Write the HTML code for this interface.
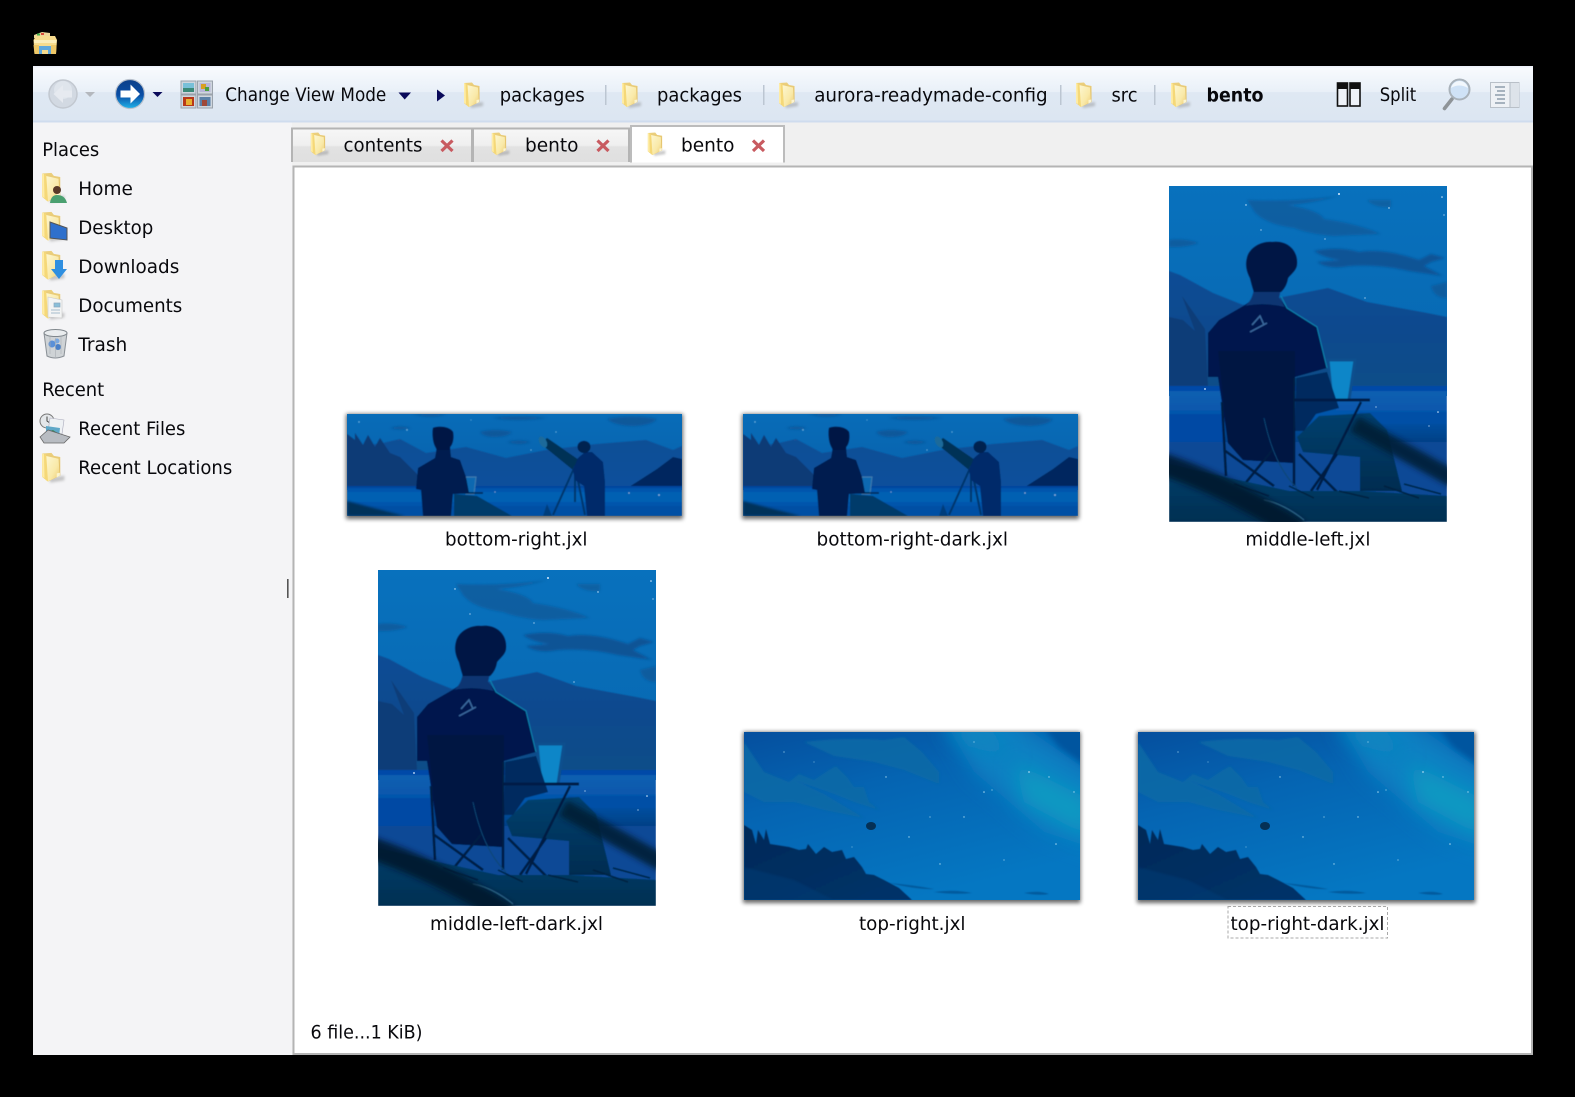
<!DOCTYPE html>
<html><head><meta charset="utf-8"><title>bento</title>
<style>
html,body{margin:0;padding:0;background:#000;width:1575px;height:1097px;overflow:hidden}
svg{display:block}
text{font-family:"DejaVu Sans","Liberation Sans",sans-serif;font-size:18.8px;fill:#08080c}
</style></head><body>
<svg width="1575" height="1097" viewBox="0 0 1575 1097" xmlns="http://www.w3.org/2000/svg">
<defs>
<linearGradient id="tb" x1="0" y1="0" x2="0" y2="1"><stop offset="0" stop-color="#f9fbfe"/><stop offset=".47" stop-color="#e9f0f8"/><stop offset=".48" stop-color="#dfe8f3"/><stop offset="1" stop-color="#dce6f2"/></linearGradient>
<linearGradient id="tab" x1="0" y1="0" x2="0" y2="1"><stop offset="0" stop-color="#f7f7f7"/><stop offset=".5" stop-color="#efefef"/><stop offset=".55" stop-color="#e2e2e2"/><stop offset="1" stop-color="#dfdfdf"/></linearGradient>
<linearGradient id="fo" x1="0" y1="0" x2="1" y2="1"><stop offset="0" stop-color="#fdf7d2"/><stop offset=".6" stop-color="#f9e9a8"/><stop offset="1" stop-color="#ecca70"/></linearGradient>
<linearGradient id="fb" x1="0" y1="0" x2="0" y2="1"><stop offset="0" stop-color="#ecd07e"/><stop offset="1" stop-color="#d8b052"/></linearGradient>
<filter id="b1" x="-30%" y="-30%" width="160%" height="160%"><feGaussianBlur stdDeviation="1"/></filter>
<filter id="b05"><feGaussianBlur stdDeviation=".45"/></filter>
<filter id="b3" x="-50%" y="-50%" width="200%" height="200%"><feGaussianBlur stdDeviation="3"/></filter>
<filter id="b10" x="-50%" y="-50%" width="200%" height="200%"><feGaussianBlur stdDeviation="10"/></filter>
<filter id="sh" x="-5%" y="-10%" width="110%" height="125%"><feGaussianBlur stdDeviation="2"/></filter>
<filter id="fs" x="-30%" y="-30%" width="170%" height="170%"><feGaussianBlur stdDeviation="1.2"/></filter>

<symbol id="fold" viewBox="0 0 24 26" overflow="visible">
<path d="M7 22 L20 20 L20 24 L8 26Z" fill="#8a8a8a" opacity=".45" filter="url(#fs)"/>
<path d="M1 1 L9 .5 L11 3 L16.500 4 L16.500 20 L6 25 L1 21Z" fill="url(#fb)"/>
<path d="M4 3 L15 5.500 L16 20 L6 25 L4 24Z" fill="url(#fo)"/>
<path d="M1 1 L4.500 2 L6 25 L1 21Z" fill="#f5d878"/>
<path d="M1 1 L2.500 1.500 L3 22 L1 21Z" fill="#fff0ae" opacity=".85"/>
<path d="M13.500 18 L16.200 17.500 L16.200 20 L13.500 21.500Z" fill="#fbf4d0"/>
</symbol>

<linearGradient id="aS" x1="0" y1="0" x2="0" y2="1"><stop offset="0" stop-color="#086cb8"/><stop offset="1" stop-color="#0760aa"/></linearGradient>
<linearGradient id="aM" x1="0" y1="0" x2="0" y2="1"><stop offset="0" stop-color="#124f96"/><stop offset="1" stop-color="#0a4f9c"/></linearGradient>
<symbol id="a" viewBox="0 0 335 102">
<rect width="335" height="76" fill="url(#aS)"/>
<g filter="url(#b05)">
<g filter="url(#b1)" fill="#0a5496" opacity=".85">
<path d="M133 18 q15-4 32 0 q-4 5-18 5 q-10 0-14-5z M260 5 q25-5 50 0 q-5 6-22 7 q-20 0-28-7z M43 14 q10-3 21 0 q-10 3-21 0z M160 28 q12-3 24 0 q-12 4-24 0z M200 4 q-30 4-55 0 q25-3 55 0z M65 0 h35 q-15 5-35 0z"/>
</g>
<path d="M0 34 L36 29 L53 25 L79 39 L119 33 L159 44 L199 36 L250 30 L299 26 L326 36 L335 32 V76 H0Z" fill="url(#aM)"/>
<path d="M0 20 L8 26 L8 19 L16 31 L21 21 L28 33 L33 24 L43 39 L53 43 L69 59 L83 74 H0Z" fill="#0b3a76"/>
<path d="M282 73 L310 55 L326 43 L335 45 V73Z" fill="#04285e"/>
<rect y="72" width="335" height="30" fill="#0555ac"/>
<rect y="72" width="335" height="2" fill="#03449e"/>
<rect y="78" width="335" height="10" fill="#0560b2"/>
<rect y="92" width="335" height="10" fill="#0350a4"/>
<path d="M107 80 L130 82 L165 102 H107Z" fill="#033b6a"/>
<path d="M119 63 H129 L127 80 H119Z" fill="#0868b0" stroke="#3f7fb0" stroke-width="1"/>
<path d="M106 79 H136" stroke="#02234f" stroke-width="1.500"/>
<path d="M0 87 Q30 95 58 102 H0Z" fill="#02305a" filter="url(#b1)"/>
<path d="M90 33 L103 33 L104 43 L113 46 L119 63 L122 79 L106 80 L104 102 L76 102 L74 76 L69 75 L71 54 L88 44Z" fill="#011a50"/>
<path d="M86 14 C90 12 102 12 106 18 C107 24 106 30 103 33 L102 36 H90 L88 32 C86 28 85 20 86 14Z" fill="#011645"/>
<path d="M194 30 L200 24 L232 46 L226 56Z" fill="#053056"/>
<ellipse cx="196" cy="28" rx="3.500" ry="6" fill="#1f6a9a" transform="rotate(-30 196 28)"/>
<path d="M228 52 L206 101 M228 52 L238 101 M228 52 V88" stroke="#03346a" stroke-width="2" fill="none"/>
<path d="M231 44 L238 38 L245 38 L256 48 L258 68 L258 102 L240 102 L237 72 L228 66 L226 56Z" fill="#02296a"/>
<ellipse cx="237" cy="33" rx="6.500" ry="6" fill="#01204f"/>
<path d="M200 90 L205 102 H196Z" fill="#033a70" opacity=".8"/>
<g fill="#9cc8e8"><circle cx="12" cy="8" r=".7"/><circle cx="60" cy="16" r=".7"/><circle cx="184" cy="36" r=".6"/><circle cx="312" cy="81" r=".8"/><circle cx="282" cy="79" r=".6"/><circle cx="209" cy="18" r=".6"/><circle cx="124" cy="6" r=".5"/><circle cx="148" cy="78" r=".5"/></g>
</g>
</symbol>

<linearGradient id="bS" x1="0" y1="0" x2="0" y2="1"><stop offset="0" stop-color="#0871bd"/><stop offset="1" stop-color="#0767b0"/></linearGradient>
<linearGradient id="bM" x1="0" y1="0" x2="0" y2="1"><stop offset="0" stop-color="#0f4d95"/><stop offset=".5" stop-color="#0d4a8e"/><stop offset="1" stop-color="#0a4e88"/></linearGradient>
<linearGradient id="bL" x1="0" y1="0" x2="0" y2="1"><stop offset="0" stop-color="#0a62b2"/><stop offset=".5" stop-color="#0655ab"/><stop offset="1" stop-color="#063d80"/></linearGradient>
<linearGradient id="bG" x1="0" y1="0" x2="0" y2="1"><stop offset="0" stop-color="#02406c"/><stop offset="1" stop-color="#012f52"/></linearGradient>
<linearGradient id="bT" x1="0" y1="0" x2="0" y2="1"><stop offset="0" stop-color="#04406e"/><stop offset="1" stop-color="#012c50"/></linearGradient>
<symbol id="b" viewBox="0 0 278 336">
<rect width="278" height="210" fill="url(#bS)"/>
<g filter="url(#b05)">
<g filter="url(#b1)" opacity=".85">
<path d="M78 14 Q125 16 170 10 Q140 18 118 19 Q150 24 155 33 Q190 38 212 48 L165 50 Q140 48 125 42 Q95 38 85 25Z" fill="#0b5c9d"/>
<path d="M198 14 H222 V21 Q205 22 198 14Z" fill="#0c5e9f"/>
<path d="M145 65 Q170 60 190 66 Q215 62 250 74 L262 68 L276 72 L262 76 L255 80 L274 90 L240 85 Q210 78 180 80 Q160 84 148 76 L172 74 Q155 72 145 65Z" fill="#0a4f90"/>
<path d="M0 54 Q15 52 30 57 Q15 62 0 61Z" fill="#0b5a9b"/>
<path d="M262 100 L278 96 V112 Q265 112 262 100Z" fill="#0b5a9b"/>
</g>
<path d="M0 85 L11 89 L44 107 L74 119 L114 111 L159 102 L198 116 L258 127 L278 131 V205 H0Z" fill="url(#bM)"/>
<path d="M0 131 L14 134 L26 145 L13 110 L36 143 L39 200 H0Z" fill="#0c3d78"/>
<rect y="200" width="278" height="60" fill="url(#bL)"/>
<rect y="200" width="278" height="5" fill="#0448a8"/>
<rect y="228" width="55" height="28" fill="#0448a4"/>
<rect x="190" y="226" width="88" height="12" fill="#0650a6"/>
<rect y="256" width="278" height="60" fill="#074a96"/>
<path d="M159 174 H186 L180 214 H163Z" fill="#0a86c8" stroke="#07508e" stroke-width="3"/>
<path d="M128 251 L150 230 L201 227 L218 244 L233 305 L191 305 L191 271 L134 266Z" fill="url(#bT)"/>
<path d="M39 147 L50 134 L76 119 L86 112 L110 112 L118 122 L148 141 L158 182 L126 191 L124 227 L124 277 L74 274 L59 257 L49 191 L39 191Z" fill="#01194e"/>
<path d="M49 165 H126 V277 L74 274 L59 257Z" fill="#011342"/>
<path d="M85 102 H112 L110 112 L116 121 Q95 116 76 120 Q84 114 85 102Z" fill="#0a3672"/>
<path d="M112 110 L118 122 L148 141 L158 182" stroke="#0b86b2" stroke-width="1" fill="none"/>
<path d="M103 56 C118 54 129 64 128 78 C128 84 122 88 119 92 C118 98 116 102 112 106 H85 C83 100 82 96 81 92 C78 86 76 80 78 72 C80 62 92 55 103 56Z" fill="#011544"/>
<path d="M83 139 L91 130 L95 139 M81 146 L98 137" stroke="#3b6aa0" stroke-width="1.500" fill="none"/>
<path d="M127 192 L158 186 L170 222 L147 228 L135 245 L126 245Z" fill="#022a5e"/>
<path d="M126 214 H201" stroke="#021f46" stroke-width="3"/>
<path d="M53 216 L57 290 M125 192 V300 M192 216 L148 304 M55 264 L105 300 M105 262 L70 305 M130 268 L168 306 M168 268 L142 305" stroke="#021c42" stroke-width="2.500" fill="none"/>
<path d="M95 232 Q105 280 128 302" stroke="#0a4472" stroke-width="1" fill="none"/>
<path d="M0 278 L60 292 L120 305 L190 305 L278 310 V336 H0Z" fill="url(#bG)"/>
<path d="M95 314 Q115 318 135 334" stroke="#3b80a8" stroke-width="1" fill="none"/>
<path d="M65 298 L100 310 M170 305 L200 312 M215 300 L250 312 M120 300 L145 312 M235 298 L272 308" stroke="#01223f" stroke-width="1.500"/>
</g>
<path d="M-10 277 Q60 300 130 345" stroke="#00172c" stroke-width="22" fill="none" filter="url(#b3)" opacity=".85"/>
<path d="M185 238 L290 296" stroke="#011a30" stroke-width="17" fill="none" filter="url(#b3)" opacity=".85"/>
<g fill="#d8ecff"><circle cx="170" cy="8" r="1"/><circle cx="77" cy="19" r=".7"/><circle cx="220" cy="22" r=".7"/><circle cx="273" cy="11" r=".8"/><circle cx="156" cy="53" r=".6"/><circle cx="36" cy="203" r=".9"/><circle cx="275" cy="29" r=".6"/><circle cx="196" cy="112" r=".6"/><circle cx="269" cy="226" r=".8"/><circle cx="260" cy="240" r=".6"/><circle cx="207" cy="221" r=".6"/><circle cx="92" cy="44" r=".6"/></g>
</symbol>

<linearGradient id="cS" x1="0" y1="0" x2=".5" y2="1"><stop offset="0" stop-color="#054f9e"/><stop offset=".4" stop-color="#0564b2"/><stop offset="1" stop-color="#0577c2"/></linearGradient>
<linearGradient id="cH" x1="0" y1="0" x2="1" y2="1"><stop offset="0" stop-color="#032a58"/><stop offset="1" stop-color="#04336a"/></linearGradient>
<clipPath id="cC"><rect width="336" height="168"/></clipPath>
<symbol id="c" viewBox="0 0 336 168">
<g clip-path="url(#cC)">
<rect width="336" height="168" fill="url(#cS)"/>
<path d="M195 -20 L260 -20 L360 50 L360 120 L300 100 L230 40Z" fill="#0780c2" filter="url(#b10)"/>
<path d="M270 30 L350 70 L345 105 L280 70Z" fill="#0a9ac2" filter="url(#b10)"/>
<path d="M200 -5 L245 -5 L270 25 L225 15Z" fill="#0a85bf" filter="url(#b10)"/>
<path d="M300 -5 H350 V40 L315 15Z" fill="#05559f" filter="url(#b3)"/>
<g filter="url(#b1)" fill="#0b6aa6" opacity=".85">
<path d="M60 10 Q100 5 140 8 L160 5 L178 20 L195 40 L195 52 L160 38 L130 30 L90 24 Z"/>
<path d="M0 10 L20 40 L45 50 L55 42 L70 48 L85 38 L92 34 L103 45 L110 55 L120 55 L125 70 L135 78 L110 70 L90 62 L50 48 L80 62 L120 86 L80 78 L50 70 L20 70 L0 60Z"/>
</g>
<path d="M0 93 L8 98 L12 112 L14 98 L20 108 L22 97 L26 112 L45 115 L55 118 L62 117 L64 112 L72 122 L80 115 L88 120 L98 118 L102 127 L110 125 L118 135 L122 142 L130 143 L140 148 L155 156 L168 168 H0Z" fill="url(#cH)" filter="url(#b05)"/>
<path d="M0 135 L50 148 L90 168 H0Z" fill="#043f7c" opacity=".4" filter="url(#b1)"/>
<path d="M145 151 Q170 153 190 157 Q175 158 145 151Z M190 160 Q210 157 228 161 Q210 163 190 160Z M280 161 Q295 158 305 162 Q295 164 280 161Z" fill="#05508f" opacity=".7" filter="url(#b05)"/>
<ellipse cx="127" cy="94" rx="5" ry="4" fill="#053055"/>
<g fill="#9fd4ee"><circle cx="40" cy="20" r=".6"/><circle cx="142" cy="45" r=".7"/><circle cx="220" cy="85" r=".7"/><circle cx="240" cy="60" r=".8"/><circle cx="285" cy="40" r=".9"/><circle cx="248" cy="58" r=".6"/><circle cx="312" cy="112" r=".8"/><circle cx="196" cy="132" r=".7"/><circle cx="165" cy="105" r=".7"/><circle cx="260" cy="128" r=".6"/><circle cx="305" cy="45" r=".7"/><circle cx="230" cy="10" r=".6"/><circle cx="186" cy="85" r=".6"/><circle cx="70" cy="30" r=".5"/><circle cx="330" cy="60" r=".7"/><circle cx="108" cy="115" r=".5"/></g>
</g>
</symbol>
</defs>

<rect width="1575" height="1097" fill="#000"/>

<!-- title icon -->
<g>
<path d="M34 35 L42 32 L50 33 L50 38 H34Z" fill="#eed79a"/>
<path d="M37 33.500 h3 v2 h-3z" fill="#3fae4a"/><path d="M41 33 h3 v2 h-3z" fill="#d94a38"/>
<path d="M40 36 H55 L57 40 L56 54 H34.500 L33.500 40 L36 36Z" fill="#f7dc8e"/>
<path d="M34 40 H56.500 V43 H34Z" fill="#fbeebb"/>
<path d="M39 54 V46 H51 V54 H48 V50 H42 V54Z" fill="#5fa8dd"/>
<path d="M33.500 45 H39 V54 H34.500Z M51 45 H56.500 L56 54 H51Z" fill="#eec868"/>
</g>

<!-- window -->
<rect x="33" y="66" width="1500" height="989" fill="#f0f0f0"/>
<rect x="33" y="66" width="1500" height="55" fill="url(#tb)"/>
<rect x="33" y="66" width="1500" height="1.500" fill="#eef2fb"/>
<rect x="33" y="120.500" width="1500" height="2" fill="#cfdcee"/>
<rect x="33" y="122.500" width="259" height="932.500" fill="#f4f4f6"/>

<!-- back / forward -->
<circle cx="63" cy="94" r="14" fill="#d2d9e2" stroke="#c2c8d0" stroke-width="1.500"/>
<circle cx="63" cy="90" r="9" fill="#dfe5ec"/>
<path d="M53.500 94 L63 85 V90.500 H72 V97.500 H63 V103Z" fill="#e6eaf0"/>
<path d="M85 92 H95 L90 97Z" fill="#b4b8be"/>
<defs><linearGradient id="fw" x1="0" y1="0" x2="0" y2="1"><stop offset="0" stop-color="#0c3f88"/><stop offset=".55" stop-color="#0a4ea6"/><stop offset="1" stop-color="#22b4ea"/></linearGradient></defs>
<circle cx="130" cy="94" r="14.500" fill="url(#fw)" stroke="#b8c0cc" stroke-width="1.200"/>
<path d="M140 94 L130.500 84.500 V90.500 H120.500 V97.500 H130.500 V103.500Z" fill="#fff"/>
<path d="M152.500 92 H162.500 L157.500 97Z" fill="#0a0a5a"/>

<!-- view mode icon -->
<g>
<rect x="181" y="81" width="15" height="13" fill="#cfd6de" stroke="#9aa2ab"/>
<rect x="197.500" y="81" width="15" height="13" fill="#cfd6de" stroke="#9aa2ab"/>
<rect x="181" y="95" width="15" height="13" fill="#cfd6de" stroke="#9aa2ab"/>
<rect x="197.500" y="95" width="15" height="13" fill="#cfd6de" stroke="#9aa2ab"/>
<rect x="183" y="83" width="11" height="5" fill="#78c0d8"/><rect x="183" y="88" width="11" height="4" fill="#3b8a78"/>
<rect x="199.500" y="83" width="11" height="9" fill="#b7b6d8"/><rect x="201" y="84" width="5" height="5" fill="#d8a020"/><rect x="205" y="87" width="4" height="4" fill="#4aa040"/>
<rect x="183" y="97" width="11" height="9" fill="#b83818"/><rect x="186" y="99" width="6" height="6" fill="#e8b030"/>
<rect x="199.500" y="97" width="11" height="9" fill="#5a80a8"/><rect x="202" y="100" width="5" height="6" fill="#a04838"/>
</g>
<text x="225.300" y="101" textLength="161" lengthAdjust="spacingAndGlyphs">Change View Mode</text>
<path d="M398.500 92.500 H411 L404.700 99.500Z" fill="#0a0a5a"/>
<path d="M437 89.500 L445 95.500 L437 101.500Z" fill="#0a0a5a"/>

<!-- breadcrumbs -->
<use href="#fold" x="463" y="82" width="24" height="26"/>
<text x="499.700" y="101.500" textLength="85" lengthAdjust="spacingAndGlyphs">packages</text>
<rect x="605" y="85" width="1.500" height="20" fill="#bcc6d2"/>
<use href="#fold" x="621" y="82" width="24" height="26"/>
<text x="657" y="101.500" textLength="85" lengthAdjust="spacingAndGlyphs">packages</text>
<rect x="763" y="85" width="1.500" height="20" fill="#bcc6d2"/>
<use href="#fold" x="778" y="82" width="24" height="26"/>
<text x="814.200" y="101.500" textLength="233.500" lengthAdjust="spacingAndGlyphs">aurora-readymade-config</text>
<rect x="1060" y="85" width="1.500" height="20" fill="#bcc6d2"/>
<use href="#fold" x="1075" y="82" width="24" height="26"/>
<text x="1111.500" y="101.500" textLength="26" lengthAdjust="spacingAndGlyphs">src</text>
<rect x="1154" y="85" width="1.500" height="20" fill="#bcc6d2"/>
<use href="#fold" x="1170" y="82" width="24" height="26"/>
<text x="1206.500" y="101.500" textLength="57" lengthAdjust="spacingAndGlyphs" font-weight="bold">bento</text>

<!-- split -->
<g>
<rect x="1337.500" y="83" width="10" height="23" fill="#eef2f8" stroke="#111" stroke-width="1.600"/>
<rect x="1350" y="83" width="10" height="23" fill="#eef2f8" stroke="#111" stroke-width="1.600"/>
<rect x="1337.500" y="83" width="10" height="6" fill="#111"/>
<rect x="1350" y="83" width="10" height="6" fill="#111"/>
</g>
<text x="1379.700" y="101" textLength="36.500" lengthAdjust="spacingAndGlyphs">Split</text>
<!-- magnifier -->
<g>
<path d="M1452 99 L1444.500 108.500" stroke="#8f9498" stroke-width="3.600" stroke-linecap="round"/>
<circle cx="1459.500" cy="89.500" r="10" fill="#cfe2f6" stroke="#a9b2ba" stroke-width="2"/>
<path d="M1451 88 Q1459 83 1468 88 Q1466 81.500 1459.500 81 Q1453 81.500 1451 88Z" fill="#f2f7fc"/>
</g>
<!-- panel icon -->
<g>
<rect x="1490.500" y="82.500" width="28.500" height="25" fill="#eef1f5" stroke="#b9c0c8"/>
<rect x="1510" y="83" width="9" height="24" fill="#dde3ea"/>
<path d="M1510 82.500 V107.500" stroke="#b4bcc5"/>
<path d="M1495 87 H1505 M1497 91 H1505 M1495 95 H1505 M1497 99 H1505 M1495 103 H1505" stroke="#7b8c9e" stroke-width="1.300"/>
</g>

<!-- sidebar -->
<text x="42.200" y="156" textLength="57" lengthAdjust="spacingAndGlyphs">Places</text>
<use href="#fold" x="41" y="172" width="28" height="31"/>
<circle cx="57" cy="190" r="4" fill="#5a3a28"/><path d="M50 203 Q51 195 57 195 Q65 195 67 203Z" fill="#4aa070"/>
<text x="78.300" y="195" textLength="54.500" lengthAdjust="spacingAndGlyphs">Home</text>
<use href="#fold" x="41" y="211" width="28" height="31"/>
<path d="M50 222 L67 228 V240 L50 238Z" fill="#2f70cc" stroke="#555" stroke-width="1"/>
<text x="78.300" y="234" textLength="75" lengthAdjust="spacingAndGlyphs">Desktop</text>
<use href="#fold" x="41" y="250" width="28" height="31"/>
<path d="M55 260 H63 V269 H67 L59 279 L51 269 H55Z" fill="#2f8fe0"/>
<text x="78.300" y="273" textLength="101" lengthAdjust="spacingAndGlyphs">Downloads</text>
<use href="#fold" x="41" y="289" width="28" height="31"/>
<path d="M48 297 L62 300 V318 L48 317Z" fill="#f3f4f4" stroke="#c8c8c8" stroke-width=".6"/>
<path d="M54 303 H60 V307 H54Z M51 310 H60 M51 313 H60" stroke="#8aa8c0" fill="#8abfd8" stroke-width=".7"/>
<text x="78.300" y="312" textLength="104" lengthAdjust="spacingAndGlyphs">Documents</text>
<!-- trash -->
<g>
<path d="M44 333 Q55 328 67 333 L64 356 Q55 360 47 356Z" fill="#cfd3d6" stroke="#8a9096" stroke-width="1"/>
<ellipse cx="55.500" cy="333" rx="11.500" ry="3.500" fill="#e9ecee" stroke="#7f868c"/>
<circle cx="52" cy="344" r="3.500" fill="#5a90d8"/><circle cx="58" cy="347" r="3" fill="#4a80c8"/><circle cx="57" cy="341" r="2.500" fill="#7aa8e0"/>
<path d="M50 337 V354 M55.500 338 V357 M61 337 V354" stroke="#a8aeb3" stroke-width=".6"/>
</g>
<text x="78.300" y="351" textLength="49" lengthAdjust="spacingAndGlyphs">Trash</text>
<text x="42.200" y="396" textLength="62" lengthAdjust="spacingAndGlyphs">Recent</text>
<!-- recent files -->
<g>
<circle cx="47" cy="421" r="7" fill="#e4e7ea" stroke="#777" stroke-width="1"/>
<path d="M47 416.500 V421 L50 423" stroke="#444" fill="none" stroke-width="1"/>
<path d="M50 418 L64 420 L62 434 L48 432Z" fill="#eef1f4" stroke="#aab" stroke-width=".6"/>
<path d="M46 426 L60 428 L59 437 L46 435Z" fill="#5fa8c8"/><path d="M46 432 L53 430 L59 434 V437 L46 435Z" fill="#3b8a60"/>
<path d="M40 437 L48 430 L70 437 L64 443 H44Z" fill="#b8bcc2" stroke="#666" stroke-width=".8"/>
</g>
<text x="78.300" y="435" textLength="107" lengthAdjust="spacingAndGlyphs">Recent Files</text>
<use href="#fold" x="41" y="452" width="28" height="31"/>
<text x="78.300" y="474" textLength="154" lengthAdjust="spacingAndGlyphs">Recent Locations</text>
<rect x="287" y="579" width="1.600" height="19" fill="#555"/>

<!-- content frame -->
<rect x="293.500" y="166.500" width="1238.500" height="887.500" fill="#fff" stroke="#b4b4b4" stroke-width="2"/>

<!-- tabs -->
<path d="M292 162 V128.500 H472 V162Z" fill="url(#tab)"/>
<path d="M292 162 V128.500 H472 V162" fill="none" stroke="#b4b4b4" stroke-width="2"/>
<path d="M473 162 V128.500 H629 V162Z" fill="url(#tab)"/>
<path d="M473 162 V128.500 H629 V162" fill="none" stroke="#b4b4b4" stroke-width="2"/>
<path d="M631 162.500 V126 H784 V162.500Z" fill="#fff"/>
<path d="M631 162.500 V126 H784 V162.500" fill="none" stroke="#bcbcbc" stroke-width="2"/>
<use href="#fold" x="310" y="132" width="22" height="24"/>
<text x="343.500" y="151.500" textLength="79" lengthAdjust="spacingAndGlyphs">contents</text>
<path d="M441.500 140.500 L452.500 151 M452.500 140.500 L441.500 151" stroke="#c85a60" stroke-width="3.200"/>
<use href="#fold" x="491" y="132" width="22" height="24"/>
<text x="525" y="151.500" textLength="53.500" lengthAdjust="spacingAndGlyphs">bento</text>
<path d="M597.500 140.500 L608.500 151 M608.500 140.500 L597.500 151" stroke="#c85a60" stroke-width="3.200"/>
<use href="#fold" x="647" y="132" width="22" height="24"/>
<text x="681" y="151.500" textLength="53.500" lengthAdjust="spacingAndGlyphs">bento</text>
<path d="M753 140.500 L764 151 M764 140.500 L753 151" stroke="#c85a60" stroke-width="3.200"/>

<!-- thumbnails -->
<rect x="346" y="414" width="337" height="105" fill="#000" opacity=".6" filter="url(#sh)"/>
<use href="#a" x="347" y="414" width="335" height="102"/>
<rect x="742" y="414" width="337" height="105" fill="#000" opacity=".6" filter="url(#sh)"/>
<use href="#a" x="743" y="414" width="335" height="102"/>
<use href="#b" x="1169" y="186" width="278" height="336"/>
<use href="#b" x="378" y="570" width="278" height="336"/>
<rect x="743" y="732" width="337.500" height="171" fill="#000" opacity=".6" filter="url(#sh)"/>
<use href="#c" x="744" y="732" width="336" height="168"/>
<rect x="1137" y="732" width="338.500" height="171" fill="#000" opacity=".6" filter="url(#sh)"/>
<use href="#c" x="1138" y="732" width="336" height="168"/>

<!-- labels -->
<text x="445" y="545.500" textLength="142.500" lengthAdjust="spacingAndGlyphs">bottom-right.jxl</text>
<text x="816.500" y="545.500" textLength="191.500" lengthAdjust="spacingAndGlyphs">bottom-right-dark.jxl</text>
<text x="1245.400" y="545.500" textLength="125" lengthAdjust="spacingAndGlyphs">middle-left.jxl</text>
<text x="430" y="930" textLength="173" lengthAdjust="spacingAndGlyphs">middle-left-dark.jxl</text>
<text x="859" y="930" textLength="106.500" lengthAdjust="spacingAndGlyphs">top-right.jxl</text>
<rect x="1228" y="906.500" width="159.500" height="31.500" fill="none" stroke="#a8a8a8" stroke-width="1" stroke-dasharray="3 2"/>
<text x="1230.500" y="930" textLength="154" lengthAdjust="spacingAndGlyphs">top-right-dark.jxl</text>
<text x="310.500" y="1038.500" textLength="112" lengthAdjust="spacingAndGlyphs">6 file...1 KiB)</text>
</svg>
</body></html>
